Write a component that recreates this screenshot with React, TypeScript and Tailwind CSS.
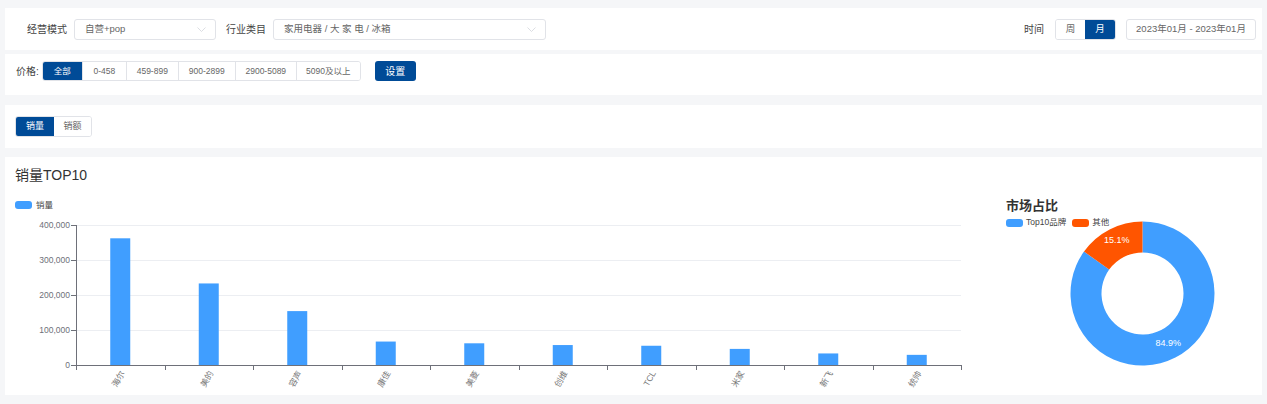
const BLUE = "#409eff";
const ORANGE = "#ff5500";

const BRANDS: [string, number][] = [
  ["海尔", 362000],
  ["美的", 233000],
  ["容声", 154000],
  ["康佳", 67000],
  ["美菱", 62000],
  ["创维", 57000],
  ["TCL", 55000],
  ["米家", 46000],
  ["新飞", 33000],
  ["统帅", 29000],
];

const PRICES = [
  { label: "全部", w: "w-[39px]", active: true },
  { label: "0-458", w: "w-[44px]" },
  { label: "459-899", w: "w-[52px]" },
  { label: "900-2899", w: "w-[57px]" },
  { label: "2900-5089", w: "w-[61px]" },
  { label: "5090及以上", w: "w-[64px]" },
];

function Chevron() {
  return (
    <svg width="9" height="5" viewBox="0 0 9 5" className="shrink-0">
      <path d="M0.5 0.5 L4.5 4.5 L8.5 0.5" stroke="#d3d6dc" strokeWidth="0.8" fill="none" />
    </svg>
  );
}

function Select({ value, className }: { value: string; className: string }) {
  return (
    <div
      className={`flex h-[21px] items-center justify-between rounded-[3px] border border-[#e1e3e8] bg-white pl-[10px] pr-[9px] text-[9.5px] text-[#666] ${className}`}
    >
      <span className="whitespace-pre">{value}</span>
      <Chevron />
    </div>
  );
}

function BarChart() {
  const x0 = 76;
  const x1 = 961;
  const base = 365;
  const step = (x1 - x0) / BRANDS.length;
  const y = (v: number) => base - (v / 400000) * 140;
  const ticks = [0, 100000, 200000, 300000, 400000];

  return (
    <svg width="990" height="200" className="shrink-0">
      <g transform="translate(-5 -195)">
        <rect x="15" y="201" width="17" height="8" rx="3" fill={BLUE} />
        <text x="36" y="205.5" fontSize="8.5" fill="#444" dominantBaseline="middle">
          销量
        </text>

        {ticks.map((t) => (
          <g key={t}>
            {t > 0 && <line x1={x0} x2={x1} y1={y(t) + 0.5} y2={y(t) + 0.5} stroke="#eceef2" />}
            <line x1={x0 - 5} x2={x0} y1={y(t) + 0.5} y2={y(t) + 0.5} stroke="#6e7079" />
            <text
              x={x0 - 6}
              y={y(t) + 0.5}
              fontSize="8.5"
              fill="#6e7079"
              textAnchor="end"
              dominantBaseline="middle"
            >
              {t.toLocaleString("en-US")}
            </text>
          </g>
        ))}

        <line x1={x0 + 0.5} x2={x0 + 0.5} y1={y(400000)} y2={base} stroke="#6e7079" />

        {BRANDS.map(([name, v], i) => {
          const cx = x0 + step * (i + 0.5);
          return (
            <g key={name}>
              <rect x={cx - 10} y={y(v)} width="20" height={base - y(v)} fill={BLUE} />
              <text
                transform={`translate(${cx + 3} 372) rotate(-60)`}
                fontSize="8.5"
                fill="#777"
                textAnchor="end"
                dominantBaseline="middle"
              >
                {name}
              </text>
            </g>
          );
        })}

        <line x1={x0} x2={x1} y1={base + 0.5} y2={base + 0.5} stroke="#6e7079" />
        {Array.from({ length: BRANDS.length + 1 }, (_, i) => (
          <line
            key={i}
            x1={Math.round(x0 + step * i) + 0.5}
            x2={Math.round(x0 + step * i) + 0.5}
            y1={base}
            y2={base + 5}
            stroke="#6e7079"
          />
        ))}
      </g>
    </svg>
  );
}

function Donut() {
  const cx = 136.5;
  const cy = 74.5;
  const R = 72;
  const r = 41;
  const pt = (a: number, rad: number) => `${cx + rad * Math.sin(a)} ${cy - rad * Math.cos(a)}`;
  const arc = (a0: number, a1: number) => {
    const large = a1 - a0 > Math.PI ? 1 : 0;
    return `M ${pt(a0, R)} A ${R} ${R} 0 ${large} 1 ${pt(a1, R)} L ${pt(a1, r)} A ${r} ${r} 0 ${large} 0 ${pt(a0, r)} Z`;
  };
  const split = 0.849 * Math.PI * 2;
  const mid = (R + r) / 2;
  const lbl = (a: number) => ({ x: cx + mid * Math.sin(a), y: cy - mid * Math.cos(a) });
  const l1 = lbl(split / 2);
  const l2 = lbl((split + Math.PI * 2) / 2);

  return (
    <svg width="256" height="176" className="-mt-[8px] block">
      <path d={arc(0, split)} fill={BLUE} />
      <path d={arc(split, Math.PI * 2)} fill={ORANGE} />
      <text x={l1.x} y={l1.y} fontSize="9" fontWeight="500" fill="#fff" textAnchor="middle" dominantBaseline="middle">
        84.9%
      </text>
      <text x={l2.x} y={l2.y - 3} fontSize="9" fontWeight="500" fill="#fff" textAnchor="middle" dominantBaseline="middle">
        15.1%
      </text>
    </svg>
  );
}

export default function App() {
  return (
    <div className="h-[404px] w-[1267px] overflow-hidden bg-[#f5f6f8] px-[5px] pt-[8px] font-['Liberation_Sans','Noto_Sans_CJK_SC',sans-serif] text-[#333]">
      {/* filter bar */}
      <div className="flex h-[42px] items-center bg-white pl-[22px] pr-[6px]">
        <span className="text-[10px] text-[#444]">经营模式</span>
        <Select value="自营+pop" className="ml-[7px] w-[142px]" />
        <span className="ml-[10px] text-[10px] text-[#444]">行业类目</span>
        <Select value="家用电器 / 大 家 电 / 冰箱" className="ml-[7px] w-[273px]" />
        <div className="flex-1" />
        <span className="text-[10px] text-[#444]">时间</span>
        <div className="ml-[11px] flex h-[21px] overflow-hidden rounded-[3px] border border-[#e1e3e8] text-[9.5px]">
          <div className="grid w-[29px] place-items-center bg-white text-[#666]">周</div>
          <div className="grid w-[30px] place-items-center bg-[#004b97] text-white">月</div>
        </div>
        <div className="ml-[10px] flex h-[21px] w-[130px] items-center justify-center rounded-[3px] border border-[#e1e3e8] text-[9.5px] text-[#666]">
          2023年01月 - 2023年01月
        </div>
      </div>

      {/* price */}
      <div className="mt-[4px] flex h-[41px] items-start bg-white pl-[11px] pt-[7px]">
        <span className="mt-[3px] text-[10px] text-[#444]">价格:</span>
        <div className="ml-[3px] flex h-[20px] overflow-hidden rounded-[3px] border border-[#e1e3e8] text-[8.5px]">
          {PRICES.map((p) => (
            <div
              key={p.label}
              className={`grid ${p.w} place-items-center border-l border-[#e1e3e8] first:border-l-0 ${
                p.active ? "bg-[#004b97] text-white" : "bg-white text-[#666]"
              }`}
            >
              {p.label}
            </div>
          ))}
        </div>
        <button className="ml-[14px] grid h-[20px] w-[41px] place-items-center rounded-[3px] bg-[#004b97] text-[10px] text-white">
          设置
        </button>
      </div>

      {/* tabs */}
      <div className="mt-[10px] flex h-[43px] items-start bg-white pl-[10px] pt-[11px]">
        <div className="flex h-[21px] overflow-hidden rounded-[3px] border border-[#e1e3e8] text-[9px]">
          <div className="grid w-[38px] place-items-center bg-[#004b97] text-white">销量</div>
          <div className="grid w-[37px] place-items-center bg-white text-[#666]">销额</div>
        </div>
      </div>

      {/* charts */}
      <div className="mt-[9px] h-[238px] overflow-hidden bg-white">
        <div className="pl-[10px] pt-[8px] text-[14px] leading-[20px] text-[#333]">销量TOP10</div>
        <div className="mt-[10px] flex">
          <BarChart />
          <div className="flex-1 pl-[11px] pt-[4px]">
            <div className="text-[13px] font-bold leading-[14px] text-[#333]">市场占比</div>
            <div className="mt-[5px] flex h-[9px] items-center text-[8.5px] text-[#444]">
              <span className="h-[8px] w-[17px] rounded-[3px] bg-[#409eff]" />
              <span className="ml-[3px]">Top10品牌</span>
              <span className="ml-[6px] h-[8px] w-[17px] rounded-[3px] bg-[#ff5500]" />
              <span className="ml-[3px]">其他</span>
            </div>
            <Donut />
          </div>
        </div>
      </div>
    </div>
  );
}
